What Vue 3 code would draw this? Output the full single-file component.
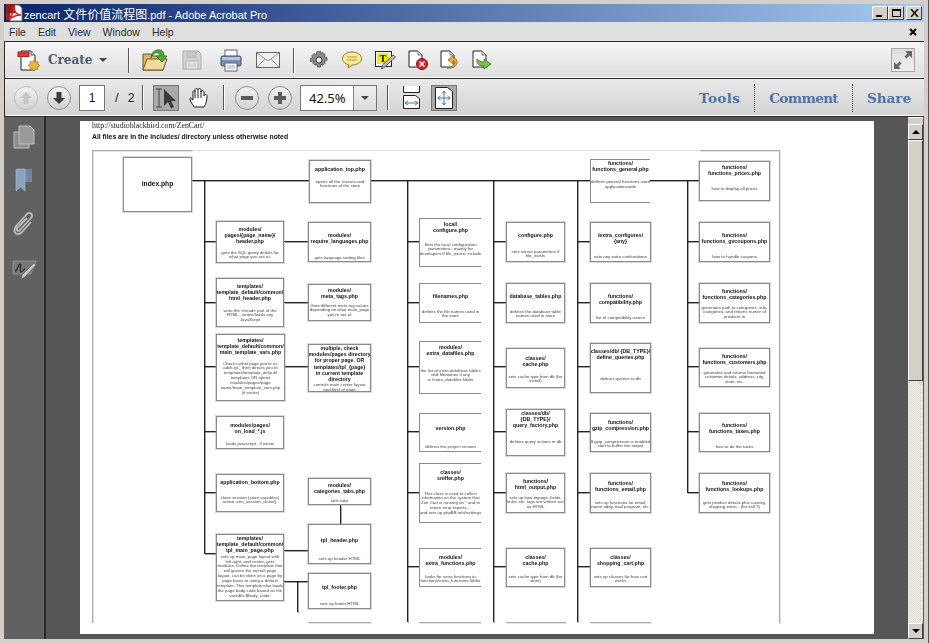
<template>
  <div class="win">
    <header class="titlebar">
      <svg class="pdf-ic" width="17" height="18" viewBox="0 0 17 18">
        <path d="M4 1h9l3 3v13H4z" fill="#fff" stroke="#6b6b6b"/>
        <path d="M0 0h9v9H0z" fill="#8c1d1d"/>
        <path d="M2 16c3-2 5-7 5-12 0-2 1-2 1 0 0 4 3 7 7 7-4 0-8 1-13 5z" fill="none" stroke="#d8201f" stroke-width="1.6"/>
        <path d="M0 9h3v7H0z" fill="#a8211f"/>
      </svg>
      <span class="title-text">zencart <span class="cjk">文件价值流程图</span>.pdf - Adobe Acrobat Pro</span>
      <div class="win-btns">
        <button class="wbtn"><i class="w-min"></i></button>
        <button class="wbtn"><i class="w-max"></i></button>
        <button class="wbtn close">
          <svg width="9" height="8" viewBox="0 0 9 8"><path d="M1 0l7 8M8 0L1 8" stroke="#000" stroke-width="1.4" fill="none"/></svg>
        </button>
      </div>
    </header>

    <nav class="menubar">
      <span v-for="m in menus" :key="m">{{ m }}</span>
      <svg class="menu-x" width="8" height="8" viewBox="0 0 8 8"><path d="M1 1l6 6M7 1L1 7" stroke="#000" stroke-width="2" fill="none"/></svg>
    </nav>

    <div class="toolbar top">
      <svg class="i-create" width="24" height="24" viewBox="0 0 24 24">
        <path d="M4 3h10l4 4v15H4z" fill="#fff" stroke="#222"/>
        <path d="M14 3v4h4" fill="#ddd" stroke="#555"/>
        <rect x="1" y="4" width="11" height="4.5" fill="#d83a3a" stroke="#a22"/>
        <path d="M17 12l1.5 2.2 2.5-.6-.2 2.6 2.2 1.3-2.2 1.4.2 2.6-2.5-.6-1.5 2.1-1.5-2.1-2.5.6.2-2.6-2.2-1.4 2.2-1.3-.2-2.6 2.5.6z" fill="#f0b63c" stroke="#a8741a" stroke-width=".7"/>
      </svg>
      <span class="create-label">Create</span>
      <i class="caret create-caret"></i>
      <i class="sep s1"></i>
      <svg class="i-open" width="26" height="24" viewBox="0 0 26 24">
        <path d="M1 6h8l2 2h10v14H1z" fill="#d9b766" stroke="#6c5522"/>
        <path d="M1 22l4-11h20l-4 11z" fill="#f1dc9d" stroke="#6c5522"/>
        <path d="M9 10C9 4 14 1 18 2c3 .6 4 3 4 6h3l-5 6-6-6h4c0-3-3-4-5-3-2 .8-3 3-4 5z" fill="#4ea73c" stroke="#2b6e22" stroke-width=".8"/>
      </svg>
      <svg class="i-save" width="20" height="20" viewBox="0 0 20 20">
        <path d="M1 1h15l3 3v15H1z" fill="#d5d5d5" stroke="#aaa"/>
        <rect x="5" y="1.500" width="9" height="6" fill="#c8c8c8" stroke="#b5b5b5"/>
        <rect x="4" y="11" width="12" height="8" fill="#e8e8e8" stroke="#b5b5b5"/>
        <path d="M6 14h3M11 14h3M6 16h8" stroke="#bbb"/>
      </svg>
      <svg class="i-print" width="22" height="23" viewBox="0 0 22 23">
        <rect x="5" y="1" width="12" height="8" fill="#fff" stroke="#55677d"/>
        <path d="M1 9q0-2 2-2h16q2 0 2 2v7q0 1-2 1H3q-2 0-2-1z" fill="#7b8fa8" stroke="#3c5370"/>
        <rect x="2" y="8" width="18" height="3" fill="#b6c4d4"/>
        <rect x="5" y="14" width="12" height="8" fill="#fff" stroke="#55677d"/>
        <path d="M7 17h8M7 19h8" stroke="#aaa"/>
      </svg>
      <svg class="i-mail" width="24" height="16" viewBox="0 0 24 16">
        <rect x=".5" y=".5" width="23" height="15" fill="#f1f1f1" stroke="#666"/>
        <path d="M1 1l11 8 11-8M1 15l8-8M23 15l-8-8" fill="none" stroke="#999"/>
      </svg>
      <i class="sep s2"></i>
      <svg class="i-gear" width="18" height="18" viewBox="0 0 18 18">
        <path d="M7.500 0h3l.5 2.500 2-.9 2.200 2.200-1 2 2.800.7v3l-2.800.6 1 2-2.200 2.200-2-1-.5 2.700h-3l-.5-2.700-2 1-2.200-2.200 1-2L0 10.500v-3l2.800-.7-1-2L4 2.600l2 .9z" fill="#8c8c8c" stroke="#3a3a3a" stroke-width=".7"/>
        <circle cx="9" cy="9" r="3" fill="#efefef" stroke="#333"/>
      </svg>
      <svg class="i-bubble" width="20" height="18" viewBox="0 0 20 18">
        <path d="M10 1c5 0 9.500 2.500 9.500 6.500S15 14 10 14l-4 3 .8-3.300C3 13 .5 10.500.5 7.500.5 3.500 5 1 10 1z" fill="#f8ec96" stroke="#8b7a28"/>
        <path d="M5 6h10M5 9h10" stroke="#a99a42"/>
      </svg>
      <svg class="i-note" width="21" height="19" viewBox="0 0 21 19">
        <rect x=".5" y=".500" width="16" height="15" fill="#fff" stroke="#222"/>
        <rect x="2" y="2" width="12" height="11" fill="#f6ea16"/>
        <text x="4.500" y="11" class="note-t">T</text>
        <path d="M18 4l2.500 2L10 16l-3.500 2 1-4z" fill="#b9b9b9" stroke="#444" stroke-width=".8"/>
      </svg>
      <svg class="i-doc" width="20" height="20" viewBox="0 0 20 20">
        <path d="M1 1h9l4 4v12H1z" fill="#fff" stroke="#222"/>
        <path d="M10 1v4h4" fill="#ddd" stroke="#777"/>
        <circle cx="14" cy="14" r="5.500" fill="#d8232a" stroke="#8d1116"/>
        <path d="M11.500 11.500l5 5M16.500 11.500l-5 5" stroke="#fff" stroke-width="1.500"/>
      </svg>
      <svg class="i-doc" width="20" height="20" viewBox="0 0 20 20">
        <path d="M1 1h9l4 4v12H1z" fill="#fff" stroke="#222"/>
        <path d="M10 1v4h4" fill="#ddd" stroke="#777"/>
        <path d="M7 18c5 1 11-2 10-7-.4-2-2-3-4-3V5.500L8 10l5 4v-3c2 0 2 1 1.500 2.500-.8 2-4 3.500-7.500 4.500z" fill="#f0aa3c" stroke="#946214" stroke-width=".8"/>
      </svg>
      <svg class="i-doc" width="20" height="20" viewBox="0 0 20 20">
        <path d="M1 1h9l4 4v12H1z" fill="#fff" stroke="#222"/>
        <path d="M10 1v4h4" fill="#ddd" stroke="#777"/>
        <path d="M5 9c-1 5 2 7 7 7v3l7-5-7-5v3c-3 0-5-1-7-3z" fill="#7dbf4d" stroke="#3e7a22" stroke-width=".8"/>
      </svg>
      <button class="expand">
        <svg width="22" height="22" viewBox="0 0 22 22">
          <path d="M13 2h7v7l-2.500-2.500-3 3-2-2 3-3zM9 20H2v-7l2.500 2.500 3-3 2 2-3 3z" fill="#666"/>
        </svg>
      </button>
    </div>

    <div class="toolbar second">
      <button class="circle off">
        <svg width="14" height="14" viewBox="0 0 14 14"><path d="M7 1l6 6H9.500v6h-5V7H1z" fill="#c4c4c4"/></svg>
      </button>
      <button class="circle down">
        <svg width="14" height="14" viewBox="0 0 14 14"><path d="M7 13l6-6H9.500V1h-5v6H1z" fill="#3c3c3c"/></svg>
      </button>
      <div class="page-box">1</div>
      <span class="slash">/</span>
      <span class="total">2</span>
      <i class="sep s3"></i>
      <button class="tool-on">
        <svg width="24" height="24" viewBox="0 0 24 24">
          <path d="M2 3h6M2 21h6M5 3v18" stroke="#444" fill="none"/>
          <path d="M10 3l12 12h-5l3 6-3 1.500-3-6.500-4 4z" fill="#3a3a3a"/>
        </svg>
      </button>
      <svg class="i-hand" width="20" height="22" viewBox="0 0 20 22">
        <path d="M5 20c-1-3-4-5-4-8 0-2 2-1 3 1V5c0-2 2-2 2 0V3c0-2 3-2 3 0v0c0-2 3-2 3 0v2c0-2 3-2 3 0v4c0-2 3-2 3 0 0 4-1 8-3 11z" fill="#fff" stroke="#222"/>
        <path d="M6 5v6M9 3v8M12 4v7" stroke="#222" fill="none"/>
      </svg>
      <i class="sep s4"></i>
      <button class="circle zoom-out"><i class="bar"></i></button>
      <button class="circle zoom-in"><i class="bar"></i><i class="bar vert"></i></button>
      <div class="zoom-box">
        <span class="zoom-val">42.5%</span>
        <span class="zoom-drop"><i class="caret"></i></span>
      </div>
      <i class="sep s5"></i>
      <svg class="i-fit" width="17" height="23" viewBox="0 0 17 23">
        <path d="M.5 0v6.500h16V0" fill="#fff" stroke="#222"/>
        <path d="M.5 9.500h12l4 3v10H.5z" fill="#fff" stroke="#222"/>
        <path d="M2 17h13M2 17l3-2M2 17l3 2M15 17l-3-2M15 17l-3 2" stroke="#4a76b4" fill="none"/>
      </svg>
      <button class="fit-on">
        <svg width="18" height="22" viewBox="0 0 18 22">
          <path d="M.5.500h12l5 4v17H.5z" fill="#fff" stroke="#222"/>
          <path d="M9 4v14M3 11h12M9 4L7 6.500M9 4l2 2.500M9 18l-2-2.500M9 18l2-2.500M3 11l2.500-2M3 11l2.500 2M15 11l-2.500-2M15 11l-2.500 2" stroke="#4a76b4" fill="none"/>
        </svg>
      </button>
      <div class="panes">
        <span class="p-tools">Tools</span>
        <i class="dots"></i>
        <span class="p-comment">Comment</span>
        <i class="dots"></i>
        <span>Share</span>
      </div>
    </div>

    <div class="content">
      <aside class="sidebar">
        <svg width="22" height="24" viewBox="0 0 22 24">
          <path d="M1 7h15v16H1z" fill="#8b8b8b" stroke="#c2c2c2"/>
          <path d="M6 1h11l4 4v14H6z" fill="#999" stroke="#c2c2c2"/>
        </svg>
        <svg width="18" height="24" viewBox="0 0 18 24">
          <path d="M8 1h9v13H8z" fill="#6f88a6"/>
          <path d="M1 2q0-1 1-1h8v22l-4.500-4L1 23z" fill="#8ba3be" stroke="#aebccb" stroke-width=".6"/>
        </svg>
        <svg width="22" height="25" viewBox="0 0 22 25">
          <path d="M4 14L14 3c3-3 7 1 4 4L7 19c-2 2-4 0-3-2L14 7" fill="none" stroke="#bdbdbd" stroke-width="1.800"/>
          <path d="M4 14c-4 4-3 8 0 9 2 .5 4-1 5-2l9-10" fill="none" stroke="#bdbdbd" stroke-width="1.800"/>
        </svg>
        <svg class="side-sign" width="25" height="19" viewBox="0 0 25 19">
          <path d="M1 1h23l-5 13H1z" fill="#787878" stroke="#a8a8a8" stroke-width=".6"/>
          <path d="M3 11c3 0 3-7 5-7s-1 8 1 8 2-3 4-3" fill="none" stroke="#2e2e2e" stroke-width="1.300"/>
          <path d="M22 3l2 2-11 12-4 2 1-4z" fill="#c6c6c6" stroke="#555" stroke-width=".6"/>
        </svg>
      </aside>

      <main class="viewer">
        <div class="page">
          <a class="page-url">http://studioblackbird.com/ZenCart/</a>
          <p class="page-note">All files are in the includes/ directory unless otherwise noted</p>
          <i v-for="(l, i) in lines" :key="i" class="line" :class="lineClass(l)" :style="lineStyle(l)"></i>
          <div v-for="n in nodes" :key="n.x + '-' + n.y" class="node" :class="{ open: n.open, big: n.big }" :style="nodeStyle(n)">
            <div class="node-title" :style="{ paddingTop: titleTop(n) + 'px' }">
              <div v-for="t in n.t" :key="t">{{ t }}</div>
            </div>
            <div class="node-desc" :style="{ marginTop: descGap(n) + 'px' }">
              <div v-for="d in n.d" :key="d">{{ d }}</div>
            </div>
          </div>
        </div>
      </main>

      <div class="scroll">
        <div class="sb-cap"></div>
        <button class="sb-btn"><i class="tri up"></i></button>
        <div class="sb-thumb"></div>
        <div class="sb-track"></div>
        <button class="sb-btn"><i class="tri"></i></button>
      </div>
    </div>
  </div>
</template>

<script setup>
const menus = ['File', 'Edit', 'View', 'Window', 'Help']

// page sits at this spot on screen, all diagram numbers below are screen pixels
const OX = 80
const OY = 121
const TITLE_LH = 6.2
const DESC_LH = 4.9

const node = (x, y, w, h, t, ty, d, dy, open) => ({ x, y, w, h, t, ty, d, dy, open })

const nodes = [
  { ...node(123, 157, 69, 55, ['index.php'], 184, [], 0), big: true },

  // first column
  node(216, 221, 68, 42, ['modules/', 'pages/{page_name}/', 'header.php'], 229, ['gets the SQL query details for', 'what page you are at.'], 253),
  node(216, 278, 68, 49, ['templates/', 'template_default/common/', 'html_header.php'], 286, ['write the <head> part of the', 'HTML., writes/loads any', 'JavaScript'], 311),
  node(216, 334, 69, 67, ['templates/', 'template_default/common/', 'main_template_vars.php'], 340, ["Checks what page you're at,", 'adds tpl_ then directs you to', 'templates/template_default/', 'templates OR opens', 'modules/pages/page', 'name/main_template_vars.php', '(if exists)'], 364),
  node(216, 416, 68, 33, ['modules/pages/', 'on_load_*.js'], 425, ['loads javascript , if exists'], 444),
  node(216, 474, 68, 38, ['application_bottom.php'], 482, ['close session (store variables)', 'action: zen_session_close();'], 498),
  node(216, 534, 68, 67, ['templates/', 'template_default/common/', 'tpl_main_page.php'], 538, ['sets up main_page layout with', 'left,right, and center, gets', 'modules. Define the template that', 'will govern the overall page', 'layout, can be done on a page by', 'page basis or using a default', 'template. This template also loads', 'the page body code based on the', 'variable $body_code.'], 557),

  // second column
  node(309, 160, 62, 43, ['application_top.php'], 169, ['opens all the classes and', 'functions of the store'], 182),
  node(308, 222, 63, 40, ['modules/', 'require_languages.php'], 235, ['gets language setting files'], 258),
  node(308, 284, 63, 37, ['modules/', 'meta_tags.php'], 290, ['Gets different meta tag values', 'depending on what main_page', "you're are at"], 306),
  node(308, 344, 63, 48, ['multiple, check', 'modules/pages directory', 'for proper page. OR', 'templates/tpl_{page}', 'in current template', 'directory'], 347, ['controls main center layout', 'and html of page'], 384),
  node(308, 478, 63, 27, ['modules/', 'categories_tabs.php'], 485, ['sets tabs'], 501),
  node(308, 524, 63, 40, ['tpl_header.php'], 540, ['sets up header HTML'], 559),
  node(308, 573, 63, 36, ['tpl_footer.php'], 587, ['sets up footer HTML'], 604),

  // third column, right edge cut in the source
  node(419, 218, 62, 49, ['local/', 'configure.php'], 224, ['Sets the local configuration', 'parameters - mainly for', 'developers If file_exists, include'], 245, true),
  node(419, 283, 62, 40, ['filenames.php'], 296, ['defines the file names used in', 'the store'], 312, true),
  node(419, 341, 62, 53, ['modules/', 'extra_datafiles.php'], 347, ['the list of extra database tables', 'and filenames if any', 'in /extra_datafiles folder'], 371, true),
  node(419, 413, 62, 39, ['version.php'], 428, ['defines the project version'], 447, true),
  node(419, 463, 62, 60, ['classes/', 'sniffer.php'], 472, ['This class is used to collect', 'information on the system that', 'Zen Cart is running on " and to', 'return error reports....', 'and sets up phpBB info/settings'], 494, true),
  node(419, 548, 62, 39, ['modules/', 'extra_functions.php'], 557, ['looks for extra functions in', 'functions/extra_functions folder'], 577, true),

  // fourth column
  node(506, 222, 59, 40, ['configure.php'], 235, ['sets server parameters if', 'file_exists'], 252),
  node(506, 283, 59, 40, ['database_tables.php'], 296, ['defines the database table', 'names used in store'], 312),
  node(506, 348, 59, 40, ['classes/', 'cache.php'], 358, ['sets cache type from db (for', 'install)'], 377),
  node(506, 409, 59, 47, ['classes/db/', '{DB_TYPE}/', 'query_factory.php'], 412, ['defines query actions in db'], 441),
  node(506, 473, 59, 40, ['functions/', 'html_output.php'], 481, ['sets up how tinpage ,fields,', 'links, etc. tags are written out', 'as HTML'], 498),
  node(506, 548, 59, 39, ['classes/', 'cache.php'], 557, ['sets cache type from db (for', 'store)'], 577),

  // fifth column
  node(590, 159, 60, 44, ['functions/', 'functions_general.php'], 163, ['defines general functions used', 'application-wide'], 182, true),
  node(590, 222, 61, 40, ['/extra_configures/', '{any}'], 235, ['sets any extra confiurations'], 257),
  node(590, 283, 61, 40, ['functions/', 'compatibility.php'], 296, ['list of compatibility issues'], 318),
  node(590, 343, 61, 50, ['classes/db/ {DB_TYPE}/', 'define_queries.php'], 351, ['defines queries to db'], 379),
  node(590, 413, 61, 39, ['functions/', 'gzip_compression.php'], 422, ['If gzip_compression is enabled', 'start to buffer the output'], 442),
  node(590, 473, 61, 40, ['functions/', 'functions_email.php'], 483, ['sets up functions for email,', 'name addy, mail program, etc.'], 503),
  node(590, 548, 61, 39, ['classes/', 'shopping_cart.php'], 557, ['sets up classes for how cart', 'works'], 577),

  // last column
  node(699, 161, 71, 40, ['functions/', 'functions_prices.php'], 167, ['how to display all prices'], 189),
  node(699, 222, 71, 40, ['functions/', 'functions_gvcoupons.php'], 235, ['how to handle coupons'], 257),
  node(699, 283, 71, 40, ['functions/', 'functions_categories.php'], 291, ['generates path to categories, sub-', 'categories, and returns numer of', 'products in'], 308),
  node(699, 348, 71, 39, ['functions/', 'functions_customers.php'], 356, ['generates and returns formatted', 'customer details, address, city,', 'state, etc.'], 373),
  node(699, 413, 71, 39, ['functions/', 'functions_taxes.php'], 425, ['how to do the taxes'], 447),
  node(699, 473, 71, 40, ['functions/', 'functions_lookups.php'], 483, ['gets product details plus country,', 'shipping zone... (for sell ?)'], 503),
]

// [x1, y1, x2, y2, kind]  kind 1 = grey frame, 2 = faint frame
const lines = [
  [92, 150, 192, 150, 1],
  [192, 150, 700, 150, 2],
  [700, 150, 779, 150, 1],
  [92, 150, 92, 623, 1],
  [779, 150, 779, 623, 1],
  [308, 622, 371, 622, 1],
  [419, 622, 481, 622, 1],
  [506, 622, 566, 622, 1],
  [590, 622, 651, 622, 1],
  [192, 180, 699, 180],
  [204, 180, 204, 553],
  [407, 180, 407, 622],
  [493, 180, 493, 622],
  [577, 180, 577, 622],
  [687, 180, 687, 492],
  [204, 553, 216, 553],
  [297, 581, 297, 612],
  [340, 505, 340, 524],
  [284, 550, 308, 550],
  [284, 581, 308, 581],
]
for (const y of [241, 302, 366, 431, 492]) lines.push([204, y, 216, y])
for (const y of [241, 302, 366]) lines.push([284, y, 308, y])
for (const y of [241, 302, 366, 431, 492, 566]) {
  lines.push([407, y, 419, y], [493, y, 506, y], [577, y, 590, y])
}
for (const y of [241, 302, 366, 431, 492]) lines.push([687, y, 699, y])

const lineClass = (l) => ({ frame: l[4] === 1, faint: l[4] === 2 })

const lineStyle = ([x1, y1, x2, y2]) => ({
  left: x1 - OX + 'px',
  top: y1 - OY + 'px',
  width: Math.max(x2 - x1, 1) + 'px',
  height: Math.max(y2 - y1, 1) + 'px',
})

const nodeStyle = (n) => ({
  left: n.x - OX + 'px',
  top: n.y - OY + 'px',
  width: n.w + 'px',
  height: n.h + 'px',
})

const titleTop = (n) => n.ty - n.y - TITLE_LH / 2 - 1
const descGap = (n) => n.dy ? n.dy - DESC_LH / 2 - (n.ty - TITLE_LH / 2 + n.t.length * TITLE_LH) : 0
</script>

<style>
html, body { margin: 0; background: #d4d0c8; overflow: hidden; }
</style>

<style scoped>
.win {
  width: 929px;
  height: 643px;
  box-sizing: border-box;
  padding: 4px 4px 4px 4px;
  background: #d4d0c8;
  border-right: 1px solid #555;
  display: flex;
  flex-direction: column;
  font-family: "Liberation Sans", "Noto Sans CJK SC", sans-serif;
  overflow: hidden;
}
.titlebar {
  height: 18px;
  flex: none;
  display: flex;
  align-items: center;
  background: linear-gradient(90deg, #0a246a, #a6caf0);
  color: #fff;
  font-size: 11px;
}
.pdf-ic { margin-left: 2px; flex: none; }
.title-text { margin-left: 1px; white-space: nowrap; }
.cjk { font-size: 12px; font-family: "Noto Sans CJK SC", sans-serif; }
.win-btns { margin-left: auto; display: flex; margin-right: 2px; }
.wbtn {
  width: 16px;
  height: 14px;
  padding: 0;
  background: #d4d0c8;
  border: 1px solid;
  border-color: #fff #404040 #404040 #fff;
  display: flex;
  align-items: center;
  justify-content: center;
  position: relative;
}
.wbtn.close { margin-left: 2px; }
.w-min { position: absolute; left: 3px; bottom: 2px; width: 6px; height: 2px; background: #000; }
.w-max { width: 9px; height: 8px; border: 1px solid #000; border-top-width: 2px; box-sizing: border-box; }

.menubar {
  height: 19px;
  flex: none;
  display: flex;
  align-items: center;
  gap: 12px;
  padding-left: 5px;
  background: #dfdfdf;
  color: #2d2d2d;
  font-size: 10.5px;
  position: relative;
}
.menu-x { margin-left: auto; margin-right: 7px; }

.toolbar {
  flex: none;
  display: flex;
  align-items: center;
  border: 0 solid #2c2c2c;
  border-left-width: 1px;
  position: relative;
}
.toolbar.top {
  height: 36px;
  border-top-width: 1px;
  background: linear-gradient(#f6f6f6, #dedede);
  box-shadow: inset 0 -1px 0 #fff;
}
.toolbar.second {
  height: 37px;
  border-top-width: 1px;
  background: linear-gradient(#e9e9e9, #d3d3d3);
  box-shadow: inset 0 -1px 0 #fff;
}
.sep { width: 1px; height: 25px; background: #555; box-shadow: 1px 0 0 #fff; flex: none; }
.caret { width: 0; height: 0; border: 4px solid transparent; border-top: 4px solid #444; border-bottom: 0; display: block; flex: none; }

.i-create { margin-left: 12px; flex: none; }
.create-label {
  margin-left: 7px;
  font-family: "DejaVu Serif", serif;
  font-size: 12px;
  font-weight: 700;
  color: #4f5d6e;
}
.create-caret { margin-left: 7px; }
.s1 { margin-left: 21px; }
.i-open { margin-left: 13px; flex: none; }
.i-save { margin-left: 14px; flex: none; }
.i-print { margin-left: 18px; flex: none; }
.i-mail { margin-left: 14px; flex: none; }
.s2 { margin-left: 13px; }
.i-gear { margin-left: 16px; flex: none; }
.i-bubble { margin-left: 14px; flex: none; }
.i-note { margin-left: 13px; flex: none; }
.note-t { font: 700 10px "Liberation Serif", serif; fill: #111; }
.i-doc { margin-left: 12px; flex: none; }
.i-note + .i-doc { margin-left: 12px; }
.expand {
  margin-left: auto;
  margin-right: 9px;
  width: 24px;
  height: 24px;
  padding: 0;
  border: 1px solid #a6a6a6;
  background: linear-gradient(#dcdcdc, #f0f0f0);
  display: flex;
  align-items: center;
  justify-content: center;
}

.circle {
  width: 24px;
  height: 24px;
  padding: 0;
  border-radius: 50%;
  border: 1px solid #8f8f8f;
  background: linear-gradient(#f2f2f2, #d2d2d2);
  display: flex;
  align-items: center;
  justify-content: center;
  position: relative;
  flex: none;
}
.circle.off { margin-left: 9px; border-color: #bdbdbd; }
.circle.down { margin-left: 9px; }
.page-box {
  margin-left: 8px;
  width: 26px;
  height: 26px;
  box-sizing: border-box;
  border: 1px solid #777;
  background: #fff;
  color: #111;
  font-size: 12px;
  display: flex;
  align-items: center;
  justify-content: center;
  flex: none;
}
.slash { margin-left: 10px; font-size: 13px; color: #222; }
.total { margin-left: 9px; font-size: 12px; color: #222; }
.s3 { margin-left: 8px; }
.tool-on {
  margin-left: 10px;
  width: 26px;
  height: 26px;
  padding: 0;
  border: 1px solid #777;
  background: #a9a9a9;
  flex: none;
  display: flex;
  align-items: center;
  justify-content: center;
}
.i-hand { margin-left: 10px; flex: none; }
.s4 { margin-left: 14px; }
.zoom-out { margin-left: 11px; }
.zoom-in { margin-left: 9px; }
.bar { width: 12px; height: 4px; background: #5c5c5c; display: block; }
.bar.vert { position: absolute; width: 4px; height: 12px; }
.zoom-box {
  margin-left: 8px;
  width: 77px;
  height: 26px;
  box-sizing: border-box;
  border: 1px solid #777;
  background: #fff;
  display: flex;
  flex: none;
}
.zoom-val { flex: 1; text-align: center; line-height: 24px; font-size: 13px; color: #111; font-family: "Noto Sans", sans-serif; }
.zoom-drop {
  width: 22px;
  border-left: 1px solid #888;
  background: linear-gradient(#efefef, #dcdcdc);
  display: flex;
  align-items: center;
  justify-content: center;
}
.s5 { margin-left: 10px; }
.i-fit { margin-left: 15px; flex: none; }
.fit-on {
  margin-left: 11px;
  width: 26px;
  height: 26px;
  padding: 0;
  border: 1px solid #777;
  background: #a9a9a9;
  display: flex;
  align-items: center;
  justify-content: center;
  flex: none;
}
.panes {
  margin-left: auto;
  margin-right: 13px;
  display: flex;
  align-items: center;
  gap: 14px;
  font-family: "DejaVu Serif", serif;
  font-size: 13.5px;
  font-weight: 700;
  color: #4f74a6;
}
.p-tools { letter-spacing: .4px; }
.p-comment { letter-spacing: -.6px; }
.dots { width: 0; height: 28px; border-left: 1px dotted #444; }

.content {
  flex: 1;
  min-height: 0;
  display: flex;
  border-top: 1px solid #2c2c2c;
  background: #565656;
}
.sidebar {
  width: 40px;
  flex: none;
  background: #616161;
  border-right: 2px solid #2a2a2a;
  display: flex;
  flex-direction: column;
  align-items: center;
  padding-top: 8px;
  gap: 19px;
}
.side-sign { margin-top: 5px; }
.viewer { flex: 1; padding-left: 34px; min-width: 0; background: #565656; }
.page {
  width: 794px;
  height: 513px;
  margin-top: 4px;
  background: #fff;
  position: relative;
  overflow: hidden;
}
.page-url {
  position: absolute;
  left: 12px;
  top: 0;
  font-family: "Liberation Serif", serif;
  font-size: 7.8px;
  line-height: 10px;
  color: #222;
  filter: blur(.3px);
}
.page-note {
  position: absolute;
  left: 12px;
  top: 11px;
  margin: 0;
  font-family: "Liberation Sans", sans-serif;
  font-size: 6.8px;
  font-weight: 700;
  line-height: 9px;
  color: #111;
  white-space: nowrap;
  filter: blur(.2px);
}
.line { position: absolute; background: #222; display: block; box-shadow: 1px 1px 0 rgba(0, 0, 0, .35); }
.line.frame { background: #aaa; box-shadow: 1px 1px 0 rgba(0, 0, 0, .1); }
.line.faint { background: #ddd; box-shadow: none; }
.node {
  position: absolute;
  box-sizing: border-box;
  border: 1px solid #8a8a8a;
  outline: 1px solid rgba(150, 150, 150, .35);
  background: #fff;
  text-align: center;
  white-space: nowrap;
  overflow: hidden;
  font-family: "Liberation Sans", sans-serif;
  display: flex;
  flex-direction: column;
  align-items: center;
}
.node.open { border-right: 0; outline: 0; }
.node-title { font-size: 5.25px; font-weight: 700; line-height: 6.2px; color: #111; filter: blur(.25px); }
.node.big .node-title { font-size: 6.7px; }
.node-desc { font-size: 4.35px; line-height: 4.9px; color: #444; filter: blur(.2px); }

.scroll {
  width: 15px;
  margin-right: 1px;
  flex: none;
  display: flex;
  flex-direction: column;
  background: #565656;
}
.sb-cap { height: 7px; flex: none; background: #d4d0c8; border-top: 1px solid #fff; box-sizing: border-box; }
.sb-btn {
  height: 16px;
  padding: 0;
  background: #d4d0c8;
  border: 1px solid;
  border-color: #fff #404040 #404040 #fff;
  display: flex;
  align-items: center;
  justify-content: center;
  flex: none;
}
.tri { border: 4px solid transparent; border-top: 4px solid #000; border-bottom: 0; display: block; }
.tri.up { border-top: 0; border-bottom: 4px solid #000; }
.sb-thumb {
  height: 241px;
  flex: none;
  background: #d4d0c8;
  border: 1px solid;
  border-color: #fff #404040 #404040 #fff;
  box-sizing: border-box;
}
.sb-track {
  flex: 1;
  background: repeating-conic-gradient(#d4d0c8 0 25%, #fff 0 50%) 0 0 / 2px 2px;
}
</style>
